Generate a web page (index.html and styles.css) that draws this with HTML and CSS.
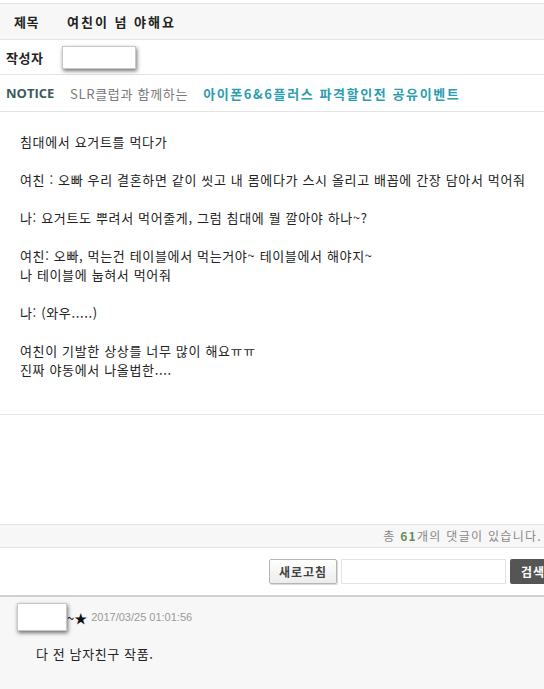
FILE: index.html
```html
<!DOCTYPE html>
<html lang="ko">
<head>
  <meta charset="UTF-8">
  <meta name="viewport" content="width=device-width, initial-scale=1.0">
  <title>여친이 넘 야해요</title>
  <link rel="stylesheet" href="styles.css">
</head>
<body>
  <div class="post">
    <div class="row title-row">
      <span class="label">제목</span>
      <span class="title">여친이 넘 야해요</span>
    </div>
    <div class="row author-row">
      <span class="label">작성자</span>
      <span class="mask mask-author"></span>
    </div>
    <div class="row notice-row">
      <span class="notice">NOTICE</span>
      <span class="notice-text">SLR클럽과 함께하는</span>
      <a class="notice-link" href="#">아이폰6&amp;6플러스 파격할인전 공유이벤트</a>
    </div>

    <div class="content">
      침대에서 요거트를 먹다가<br>
      <br>
      여친 : 오빠 우리 결혼하면 같이 씻고 내 몸에다가 스시 올리고 배꼽에 간장 담아서 먹어줘<br>
      <br>
      나: 요거트도 뿌려서 먹어줄게, 그럼 침대에 뭘 깔아야 하나~?<br>
      <br>
      여친: 오빠, 먹는건 테이블에서 먹는거야~ 테이블에서 해야지~<br>
      나 테이블에 눕혀서 먹어줘<br>
      <br>
      나: (와우.....)<br>
      <br>
      여친이 기발한 상상를 너무 많이 해요ㅠㅠ<br>
      진짜 야동에서 나올법한....
    </div>
  </div>

  <div class="comments">
    <div class="comment-count">총 <b>61</b>개의 댓글이 있습니다.</div>
    <div class="toolbar">
      <button class="btn-refresh">새로고침</button>
      <input class="search-box" type="text">
      <button class="btn-search">검색</button>
    </div>
    <div class="comment">
      <div class="comment-head">
        <span class="mask mask-nick"></span>
        <span class="nick">~★</span>
        <span class="date">2017/03/25 01:01:56</span>
      </div>
      <p class="comment-body">다 전 남자친구 작품.</p>
    </div>
  </div>
</body>
</html>
```

FILE: styles.css
```css
body {
  margin: 0;
  padding: 0;
  background: #fff;
  color: #222;
  font-family: "Noto Sans CJK KR", "Liberation Sans", sans-serif;
  font-size: 13px;
  overflow-x: hidden;
}

.post {
  padding-top: 3px;
}

.row {
  display: flex;
  align-items: center;
  border-top: 1px solid #e4e4e4;
}

.title-row {
  height: 35px;
  background: #f7f7f7;
}

.author-row {
  height: 34px;
}

.notice-row {
  height: 36px;
  border-bottom: 1px solid #e4e4e4;
}

.label {
  color: #222;
  font-weight: bold;
  letter-spacing: 0.5px;
}

.title-row .label {
  width: 53px;
  padding-left: 14px;
}

.author-row .label {
  width: 56px;
  padding-left: 6px;
}

.title {
  font-weight: bold;
  letter-spacing: 2px;
}

.mask {
  display: inline-block;
  background: #fff;
  border: 1px solid #c8c8c8;
  box-shadow: 1px 2px 4px rgba(0, 0, 0, 0.55);
}

.mask-author {
  width: 72px;
  height: 21px;
}

.notice {
  padding-left: 6px;
  width: 58px;
  color: #3d5b5c;
  font-family: "Open Sans", "Liberation Sans", sans-serif;
  font-weight: bold;
  font-size: 13px;
}

.notice-text {
  margin-left: 6px;
  color: #7a7a7a;
  letter-spacing: 0.7px;
}

.notice-link {
  margin-left: 15px;
  color: #2b9db0;
  font-weight: bold;
  letter-spacing: 1.6px;
  text-decoration: none;
}

.content {
  height: 282px;
  padding: 20px 0 0 20px;
  line-height: 19px;
  letter-spacing: 0.65px;
  border-bottom: 1px solid #e6e6e6;
}

.comments {
  padding-top: 109px;
}

.comment-count {
  height: 22px;
  line-height: 22px;
  text-align: right;
  padding-right: 2px;
  background: #f7f7f7;
  border-top: 1px solid #e4e4e4;
  border-bottom: 1px solid #e4e4e4;
  color: #888;
  font-size: 12px;
  letter-spacing: 1.3px;
}

.comment-count b {
  color: #6b8a5e;
}

.toolbar {
  display: flex;
  justify-content: flex-end;
  align-items: center;
  gap: 4px;
  height: 47px;
  margin-right: -12px;
  border-bottom: 2px solid #cfcfcf;
}

.btn-refresh {
  width: 68px;
  height: 25px;
  padding: 0;
  border: 1px solid #b5b5b5;
  border-radius: 2px;
  background: linear-gradient(#ffffff, #ececec);
  box-shadow: 1px 1px 1px rgba(0, 0, 0, 0.15);
  color: #444;
  font-family: inherit;
  font-size: 12px;
  font-weight: bold;
  letter-spacing: 1px;
}

.search-box {
  width: 163px;
  height: 23px;
  padding: 0;
  border: 1px solid #e4e4e4;
}

.btn-search {
  width: 46px;
  height: 25px;
  padding: 0;
  border: none;
  border-radius: 2px;
  background: #555;
  color: #fff;
  font-family: inherit;
  font-size: 12px;
  font-weight: bold;
  letter-spacing: 1px;
}

.comment {
  background: #f7f7f7;
  height: 93px;
  padding: 6px 0 0 17px;
}

.comment-head {
  display: flex;
  align-items: center;
}

.mask-nick {
  width: 48px;
  height: 26px;
}

.nick {
  color: #111;
  font-size: 13px;
}

.date {
  margin-left: 4px;
  color: #9a9a9a;
  font-family: "Liberation Sans", sans-serif;
  font-size: 11px;
}

.comment-body {
  margin: 13px 0 0 19px;
  letter-spacing: 0.6px;
}
```
